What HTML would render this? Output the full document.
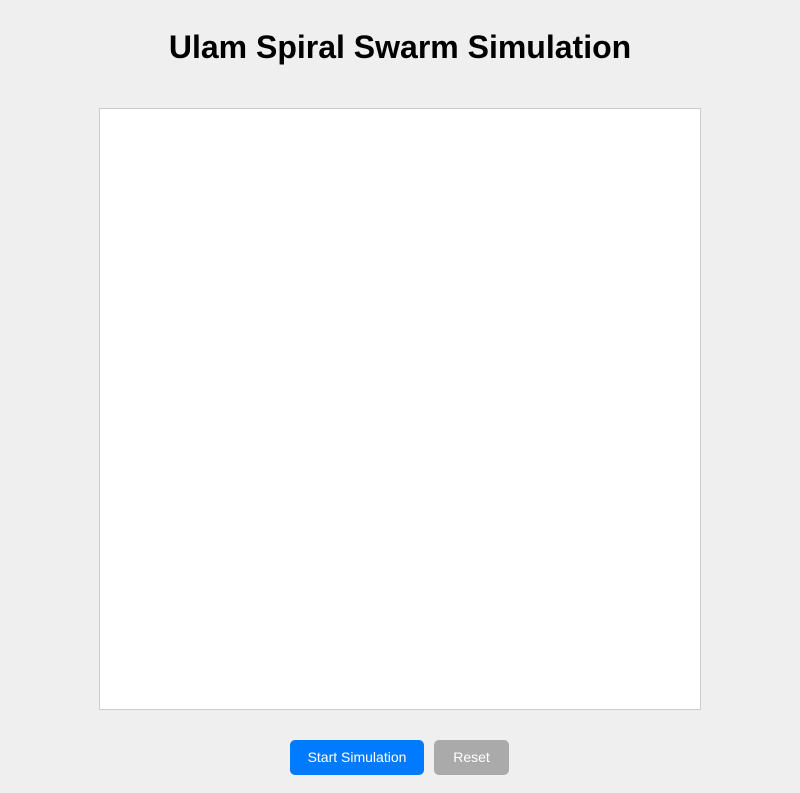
<!DOCTYPE html>
<html><head><style>
body{margin:0;background:#efefef;font-family:"Liberation Sans",Arial,sans-serif;width:800px;height:793px;overflow:hidden;position:relative}
h1{position:absolute;top:28px;left:0;width:800px;margin:0;text-align:center;font-size:32px;font-weight:bold;line-height:38px;color:#000}
.c{position:absolute;left:99px;top:108px;width:600px;height:600px;background:#fff;border:1px solid #ccc}
.b{position:absolute;top:740px;height:35px;border-radius:5px;color:#fff;font-size:14px;line-height:35px;text-align:center}
</style></head><body>
<h1>Ulam Spiral Swarm Simulation</h1>
<div class="c"></div>
<div class="b" style="left:290px;width:134px;background:#007bff">Start Simulation</div>
<div class="b" style="left:434px;width:75px;background:#aaa">Reset</div>
</body></html>
